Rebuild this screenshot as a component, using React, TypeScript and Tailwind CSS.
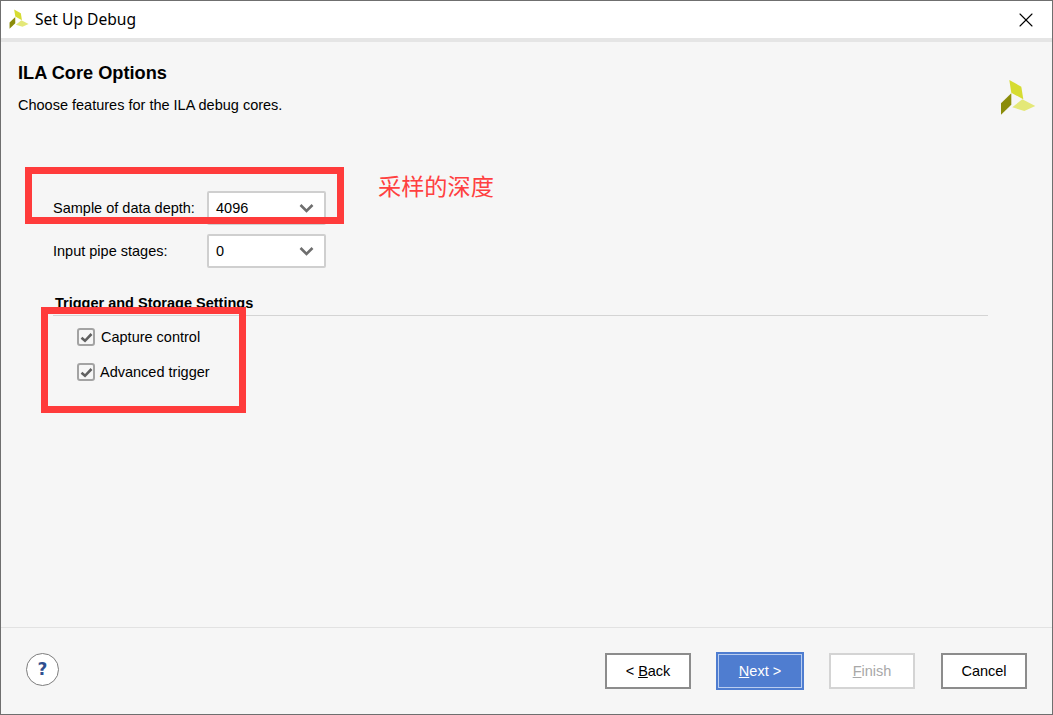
import { X } from 'lucide-react';

function Logo({ size }: { size: number }) {
  return (
    <svg width={size} height={size} viewBox="0 0 36 36">
      <polygon points="9.3,1 21.3,7.7 23.3,20.3 11.3,13.7" fill="#d6dc32" />
      <polygon points="12.3,28.3 22.3,20.3 35.3,27 24.3,32" fill="#e4e878" />
      <polygon points="1,24.3 11.3,14.3 11.3,25.7 1,35.7" fill="#8b8c0a" />
    </svg>
  );
}

function Select({ value }: { value: string }) {
  return (
    <div className="flex h-[34px] w-[119px] items-center justify-between rounded-[2px] border-2 border-[#cfcfcf] bg-white pl-[7px] pr-[10px]">
      <span className="pt-[2px] text-[14.5px] text-black">{value}</span>
      <svg width="15" height="10" viewBox="0 0 15 10">
        <path d="M1.5 2 L7.5 8 L13.5 2" fill="none" stroke="#6e6e6e" strokeWidth="2.6" />
      </svg>
    </div>
  );
}

function Check({ label, gap }: { label: string; gap: string }) {
  return (
    <label className={`flex h-[18px] items-center ${gap}`}>
      <span className="flex h-[18px] w-[18px] items-center justify-center rounded-[3px] border-2 border-[#a3a3a3] bg-[#f6f6f6]">
        <svg width="13" height="13" viewBox="0 0 13 13">
          <path d="M1.5 6.8 L5 9.8 L11.5 3" fill="none" stroke="#606060" strokeWidth="2.6" />
        </svg>
      </span>
      <span className="pt-[2px] text-[14.5px] text-black">{label}</span>
    </label>
  );
}

function Button({ children, variant }: { children: React.ReactNode; variant?: 'primary' | 'disabled' }) {
  if (variant === 'primary') {
    return (
      <button className="h-[38px] w-[88px] border-2 border-[#4f7dd0] bg-[#4f7dd0] pt-[0px] text-[14.5px] text-white outline-none">
        <span className="flex h-full w-full items-center justify-center border border-[#b9cdf0] pt-[2px]">{children}</span>
      </button>
    );
  }
  return (
    <button
      className={`h-[36px] w-[86px] border-2 bg-white pt-[2px] text-[14.5px] ${
        variant === 'disabled' ? 'border-[#d4d4d4] text-[#a8a8a8]' : 'border-[#8c8c8c] text-black'
      }`}
    >
      {children}
    </button>
  );
}

export default function App() {
  return (
    <div className="relative flex h-[715px] w-[1053px] flex-col overflow-hidden border border-[#6f6f6f] bg-[#f6f6f6] font-['Liberation_Sans',sans-serif]">
      {/* title bar */}
      <div className="flex h-[37px] shrink-0 items-center justify-between bg-white pl-[8px] pr-[14px]">
        <div className="flex items-center gap-[6px]">
          <Logo size={20} />
          <span className="font-['Noto_Sans',sans-serif] text-[15.6px] text-black">Set Up Debug</span>
        </div>
        <X size={24} strokeWidth={1.1} className="text-black" />
      </div>
      <div className="h-[4px] shrink-0 bg-[#e5e5e5]" />

      {/* header */}
      <div className="flex h-[88px] shrink-0 justify-between pl-[17px] pr-[16px]">
        <div className="pt-[20px]">
          <h1 className="text-[18.2px] leading-[22px] font-bold text-black">ILA Core Options</h1>
          <p className="mt-[11px] text-[14.5px] leading-[20px] text-black">Choose features for the ILA debug cores.</p>
        </div>
        <div className="pt-[37px]">
          <Logo size={36} />
        </div>
      </div>

      {/* options */}
      <div className="flex-1 pl-[52px] pr-[64px]">
        <div className="mt-[61px] flex h-[34px] items-center">
          <span className="w-[154px] pt-[2px] text-[14.5px] text-black">Sample of data depth:</span>
          <Select value="4096" />
        </div>
        <div className="mt-[9px] flex h-[34px] items-center">
          <span className="w-[154px] pt-[2px] text-[14.5px] text-black">Input pipe stages:</span>
          <Select value="0" />
        </div>

        <div className="mt-[26px] border-b border-[#d4d4d4] pb-[3px] pl-[2px]">
          <h2 className="text-[14.5px] leading-[18px] font-bold text-black">Trigger and Storage Settings</h2>
        </div>
        <div className="mt-[12px] flex flex-col gap-[17px] pl-[24px]">
          <Check label="Capture control" gap="gap-[6px]" />
          <Check label="Advanced trigger" gap="gap-[5px]" />
        </div>
      </div>

      {/* footer */}
      <div className="flex h-[87px] shrink-0 items-start justify-between border-t border-[#e2e2e2] pl-[25px] pr-[25px] pt-[25px]">
        <div className="flex h-[33px] w-[33px] items-center justify-center rounded-full border border-[#7d7d7d] bg-white font-['DejaVu_Sans',sans-serif] text-[17px] font-bold text-[#2f4f8f]">
          ?
        </div>
        <div className="flex items-start">
          <Button>
            &lt; <u>B</u>ack
          </Button>
          <div className="ml-[25px] -mt-[1px]">
            <Button variant="primary">
              <span>
                <u>N</u>ext &gt;
              </span>
            </Button>
          </div>
          <div className="ml-[25px]">
            <Button variant="disabled">
              <u>F</u>inish
            </Button>
          </div>
          <div className="ml-[26px]">
            <Button>Cancel</Button>
          </div>
        </div>
      </div>

      {/* red annotations drawn over the screenshot */}
      <div className="absolute left-[24px] top-[166px] h-[57px] w-[319px] border-[7px] border-[#ff3b3b]" />
      <div className="absolute left-[40px] top-[306px] h-[106px] w-[205px] border-[7px] border-[#ff3b3b]" />
      <span className="absolute left-[377px] top-[168px] font-['Noto_Sans_CJK_SC',sans-serif] text-[23.2px] leading-[32px] text-[#ff4040]">
        采样的深度
      </span>
    </div>
  );
}
